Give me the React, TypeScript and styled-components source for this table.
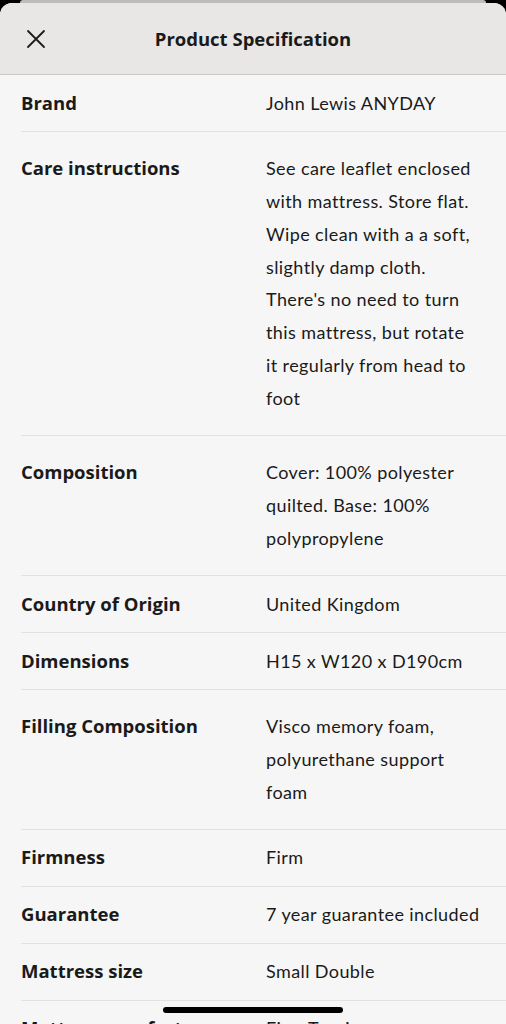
import styled, { createGlobalStyle } from "styled-components";

type Spec = { label: string; value: string; tall?: boolean };

const specs: Spec[] = [
  { label: "Brand", value: "John Lewis ANYDAY" },
  {
    label: "Care instructions",
    value:
      "See care leaflet enclosed\nwith mattress. Store flat.\nWipe clean with a a soft,\nslightly damp cloth.\nThere's no need to turn\nthis mattress, but rotate\nit regularly from head to\nfoot",
    tall: true,
  },
  {
    label: "Composition",
    value: "Cover: 100% polyester\nquilted. Base: 100%\npolypropylene",
    tall: true,
  },
  { label: "Country of Origin", value: "United Kingdom" },
  { label: "Dimensions", value: "H15 x W120 x D190cm" },
  {
    label: "Filling Composition",
    value: "Visco memory foam,\npolyurethane support\nfoam",
    tall: true,
  },
  { label: "Firmness", value: "Firm" },
  { label: "Guarantee", value: "7 year guarantee included" },
  { label: "Mattress size", value: "Small Double" },
  { label: "Mattress comfort", value: "Firm Tension" },
];

const CloseIcon = () => (
  <svg width="20" height="20" viewBox="0 0 20 20" fill="none">
    <path d="M2 2 L18 18 M18 2 L2 18" stroke="#1c1c1c" strokeWidth="1.8" strokeLinecap="round" />
  </svg>
);

export default function App() {
  return (
    <>
      <GlobalStyle />
      <ScreenStyled>
        <PeekStyled />
        <SheetStyled>
          <HeaderStyled>
            <CloseButtonStyled aria-label="Close">
              <CloseIcon />
            </CloseButtonStyled>
            <TitleStyled>Product Specification</TitleStyled>
          </HeaderStyled>
          <ListStyled>
            {specs.map((spec) => (
              <RowStyled key={spec.label} tall={spec.tall}>
                <LabelStyled>{spec.label}</LabelStyled>
                <ValueStyled>{spec.value}</ValueStyled>
              </RowStyled>
            ))}
          </ListStyled>
        </SheetStyled>
        <HomeIndicatorStyled />
      </ScreenStyled>
    </>
  );
}

const GlobalStyle = createGlobalStyle`
  html, body {
    margin: 0;
    padding: 0;
    overflow: hidden;
    background: #000;
  }

  body {
    font-family: Lato, "Noto Sans", sans-serif;
    color: #1a1a1a;
  }
`;

const ScreenStyled = styled.div`
  height: 1024px;
  overflow: hidden;
  background: #000;
  display: flex;
  flex-direction: column;
`;

const PeekStyled = styled.div`
  height: 3px;
  margin: 0 20px;
  background: #bcbcbc;
  border-radius: 10px 10px 0 0;
  flex-shrink: 0;
`;

const SheetStyled = styled.div`
  flex: 1;
  background: #f6f6f6;
  border-radius: 12px 12px 0 0;
  overflow: hidden;
`;

const HeaderStyled = styled.header`
  height: 71px;
  background: #e8e7e5;
  border-bottom: 1px solid #c9c9c9;
  display: flex;
  align-items: center;
  justify-content: center;
  position: relative;
`;

const CloseButtonStyled = styled.button`
  position: absolute;
  left: 26px;
  top: 26px;
  width: 20px;
  height: 20px;
  padding: 0;
  border: 0;
  background: none;
  display: flex;
`;

const TitleStyled = styled.h1`
  margin: 0;
  font-family: "Open Sans", Lato, sans-serif;
  font-size: 18.5px;
  font-weight: 700;
  color: #1a1a1a;
`;

const ListStyled = styled.div`
  display: flex;
  flex-direction: column;
`;

const RowStyled = styled.div<{ tall?: boolean }>`
  display: grid;
  grid-template-columns: 245px 1fr;
  margin-left: 21px;
  padding: ${(p) => (p.tall ? "20.3px 16px 20.3px 0" : "11.6px 16px 11.6px 0")};
  border-bottom: 1px solid #e2e2e2;
  font-size: 18px;
  line-height: 32.8px;
`;

const LabelStyled = styled.div`
  font-family: "Open Sans", Lato, sans-serif;
  font-size: 18.5px;
  font-weight: 700;
`;

const ValueStyled = styled.div`
  white-space: pre-line;
  letter-spacing: 0.4px;
`;

const HomeIndicatorStyled = styled.div`
  position: fixed;
  left: 50%;
  bottom: 11px;
  transform: translateX(-50%);
  width: 180px;
  height: 6px;
  border-radius: 3px;
  background: #000;
`;
